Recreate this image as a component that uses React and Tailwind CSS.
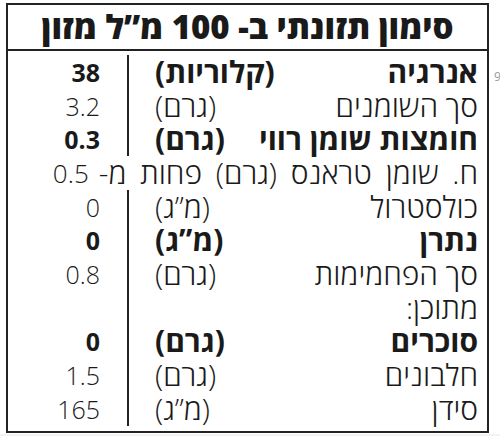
import React from 'react'

const rows = [
  { name: 'אנרגיה', unit: '(קלוריות)', value: '38', bold: true },
  { name: 'סך השומנים', unit: '(גרם)', value: '3.2' },
  { name: 'חומצות שומן רווי', unit: '(גרם)', value: '0.3', bold: true },
  { full: true },
  { name: 'כולסטרול', unit: '(מ”ג)', value: '0' },
  { name: 'נתרן', unit: '(מ”ג)', value: '0', bold: true },
  { name: 'סך הפחמימות', unit: '(גרם)', value: '0.8' },
  { name: 'מתוכן:', unit: '', value: '' },
  { name: 'סוכרים', unit: '(גרם)', value: '0', bold: true },
  { name: 'חלבונים', unit: '(גרם)', value: '1.5' },
  { name: 'סידן', unit: '(מ”ג)', value: '165' },
]

export default function App() {
  return (
    <div
      className="relative w-[500px] h-[439px] bg-white text-[#1a1a1a] overflow-hidden"
      style={{ fontFamily: '"Open Sans", "DejaVu Sans", sans-serif' }}
    >
      <div dir="rtl" className="ml-[6px] mt-[3px] w-[483px] border-2 border-[#222]">
        <div className="h-[46px] border-b-2 border-[#222] flex items-center justify-center text-[33px] font-extrabold leading-[40px]">
          סימון תזונתי ב- 100 מ”ל מזון
        </div>
        <div className="pt-[4px] pb-[5px]">
          {rows.map((r, i) =>
            r.full ? (
              <div key={i} className="h-[33.7px] flex items-center pr-[9px] text-[30px] font-light leading-[30px] whitespace-nowrap [word-spacing:6px]">
                <span>ח. שומן טראנס (גרם) פחות מ-</span>
                <span className="mr-[10px] text-[26px]" dir="ltr">0.5</span>
              </div>
            ) : (
              <div key={i} className={`h-[33.7px] flex text-[30px] leading-[30px] ${r.bold ? 'font-bold' : 'font-light'}`}>
                <div className="flex-1 flex items-center justify-between pr-[9px] pl-[26px] border-l-2 border-[#222]">
                  <span>{r.name}</span>
                  <span>{r.unit}</span>
                </div>
                <div className="w-[119px] flex items-center pr-[27px] text-[25px]">{r.value}</div>
              </div>
            )
          )}
        </div>
      </div>
      <span className="absolute left-[494px] top-[68px] text-[12px] text-[#999]">9</span>
      <div className="absolute left-0 top-[434px] w-[500px] h-[2px] bg-[#f2f2f2]" />
    </div>
  )
}
